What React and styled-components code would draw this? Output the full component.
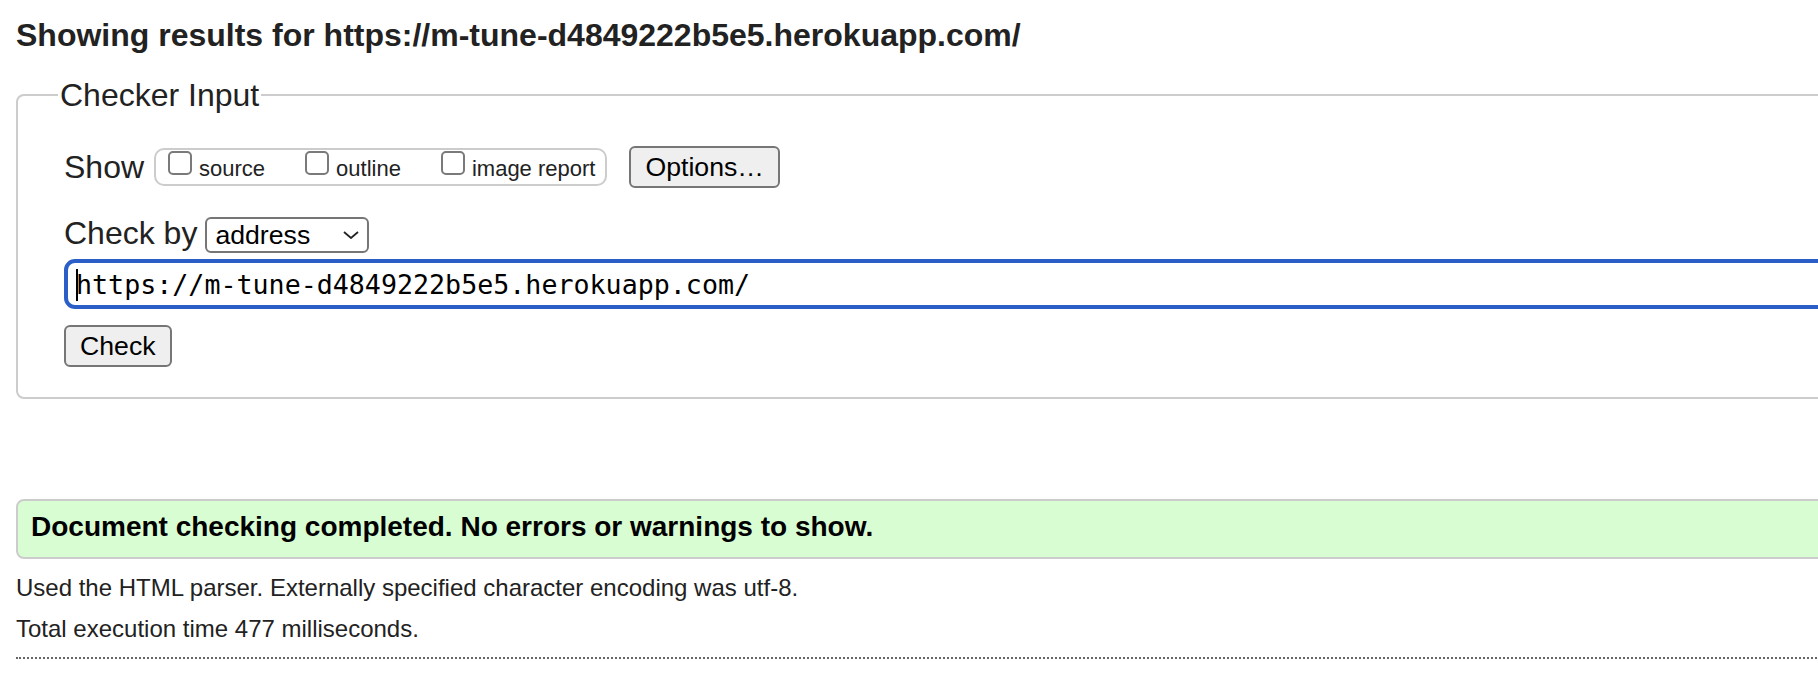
import React from 'react';
import styled, { createGlobalStyle } from 'styled-components';

const Global = createGlobalStyle`
  html, body { margin: 0; padding: 0; overflow: hidden; background: #fff; }
  body {
    font-family: "Liberation Sans", Arial, Helvetica, sans-serif;
    color: #222;
  }
`;

const Page = styled.main`
  width: 2000px;
  padding: 0 16px;
`;

const Title = styled.h2`
  margin: 15px 0 0;
  font-size: 32px;
  line-height: 40px;
  font-weight: bold;
  color: #222;
`;

const Fieldset = styled.fieldset`
  margin: 22px 0 0;
  border: 2px solid #ccc;
  border-radius: 8px;
  padding: 33px 0 30px 46px;
  min-width: 0;
`;

const Legend = styled.legend`
  font-size: 32px;
  line-height: 36px;
  margin-left: -6px;
  padding: 0 2px;
  color: #222;
`;

const Row = styled.div`
  display: flex;
  align-items: ${(p) => p.$align || 'center'};
  margin-top: ${(p) => p.$mt || 0}px;
`;

const Label = styled.span`
  font-size: 32px;
  line-height: 37px;
  margin-right: ${(p) => p.$gap || 0}px;
  color: #222;
`;

const Group = styled.div`
  display: flex;
  align-items: flex-start;
  gap: 40px;
  height: 34px;
  border: 2px solid #ccc;
  border-radius: 10px;
  padding: 0 10px 0 12px;
`;

const CheckItem = styled.label`
  display: flex;
  align-items: flex-start;
`;

const Box = styled.span`
  box-sizing: border-box;
  width: 24px;
  height: 24px;
  border: 2px solid #7a7a7a;
  border-radius: 5px;
  background: #fff;
  margin-top: 1px;
`;

const CheckText = styled.span`
  font-size: 22px;
  line-height: 26px;
  padding-top: 6px;
  margin-left: 7px;
  color: #222;
`;

const Button = styled.button`
  box-sizing: border-box;
  height: 42px;
  padding: 0 14px;
  margin-left: ${(p) => p.$ml || 0}px;
  font-family: "Liberation Sans", Arial, Helvetica, sans-serif;
  font-size: 26.67px;
  color: #000;
  background: #efefef;
  border: 2px solid #767676;
  border-radius: 6px;
`;

const SelectWrap = styled.span`
  position: relative;
  display: inline-block;
`;

const Select = styled.select`
  appearance: none;
  -webkit-appearance: none;
  box-sizing: border-box;
  width: 164px;
  height: 36px;
  padding: 0 0 0 8px;
  font-family: "Liberation Sans", Arial, Helvetica, sans-serif;
  font-size: 26.67px;
  color: #000;
  background: #fff;
  border: 2px solid #767676;
  border-radius: 6px;
`;

const Chevron = styled.svg`
  position: absolute;
  right: 10px;
  top: 14px;
  pointer-events: none;
`;

const InputWrap = styled.div`
  position: relative;
  margin-top: 6px;
`;

const UrlInput = styled.input`
  box-sizing: border-box;
  width: 1900px;
  height: 50px;
  padding: 0 0 0 8px;
  font-family: "DejaVu Sans Mono", "Liberation Mono", monospace;
  font-size: 26.67px;
  color: #000;
  background: #fff;
  border: 4px solid #2b5fc7;
  border-radius: 11px;
  outline: none;
`;

const Caret = styled.span`
  position: absolute;
  left: 12px;
  top: 10px;
  width: 2px;
  height: 32px;
  background: #000;
`;

const Success = styled.div`
  margin-top: 100px;
  border: 2px solid #ccc;
  border-radius: 8px;
  background: #d9fdd3;
  padding: 10px 13px 14px;
  font-size: 28px;
  line-height: 32px;
  font-weight: bold;
  color: #000;
`;

const Note = styled.p`
  margin: ${(p) => p.$mt || 0}px 0 0;
  font-size: 24px;
  line-height: 28px;
  color: #222;
`;

const Dotted = styled.hr`
  margin: 14px 0 0;
  border: 0;
  border-top: 2px dotted #666;
  height: 0;
`;

export default function App() {
  const url = 'https://m-tune-d4849222b5e5.herokuapp.com/';
  return (
    <Page>
      <Global />
      <Title>Showing results for {url}</Title>
      <Fieldset>
        <Legend>Checker Input</Legend>
        <Row>
          <Label $gap={10}>Show</Label>
          <Group>
            <CheckItem><Box /><CheckText>source</CheckText></CheckItem>
            <CheckItem><Box /><CheckText>outline</CheckText></CheckItem>
            <CheckItem><Box /><CheckText>image report</CheckText></CheckItem>
          </Group>
          <Button $ml={22}>Options…</Button>
        </Row>
        <Row $align="baseline" $mt={27}>
          <Label $gap={8}>Check by</Label>
          <SelectWrap>
            <Select defaultValue="address">
              <option value="address">address</option>
              <option value="upload">file upload</option>
              <option value="text">text input</option>
            </Select>
            <Chevron width="16" height="8" viewBox="0 0 16 8">
              <path d="M1 1 L8 7 L15 1" fill="none" stroke="#222" strokeWidth="1.8" />
            </Chevron>
          </SelectWrap>
        </Row>
        <InputWrap>
          <UrlInput defaultValue={url} readOnly />
          <Caret />
        </InputWrap>
        <Row $mt={16}>
          <Button>Check</Button>
        </Row>
      </Fieldset>
      <Success>Document checking completed. No errors or warnings to show.</Success>
      <Note $mt={15}>Used the HTML parser. Externally specified character encoding was utf-8.</Note>
      <Note $mt={13}>Total execution time 477 milliseconds.</Note>
      <Dotted />
    </Page>
  );
}
